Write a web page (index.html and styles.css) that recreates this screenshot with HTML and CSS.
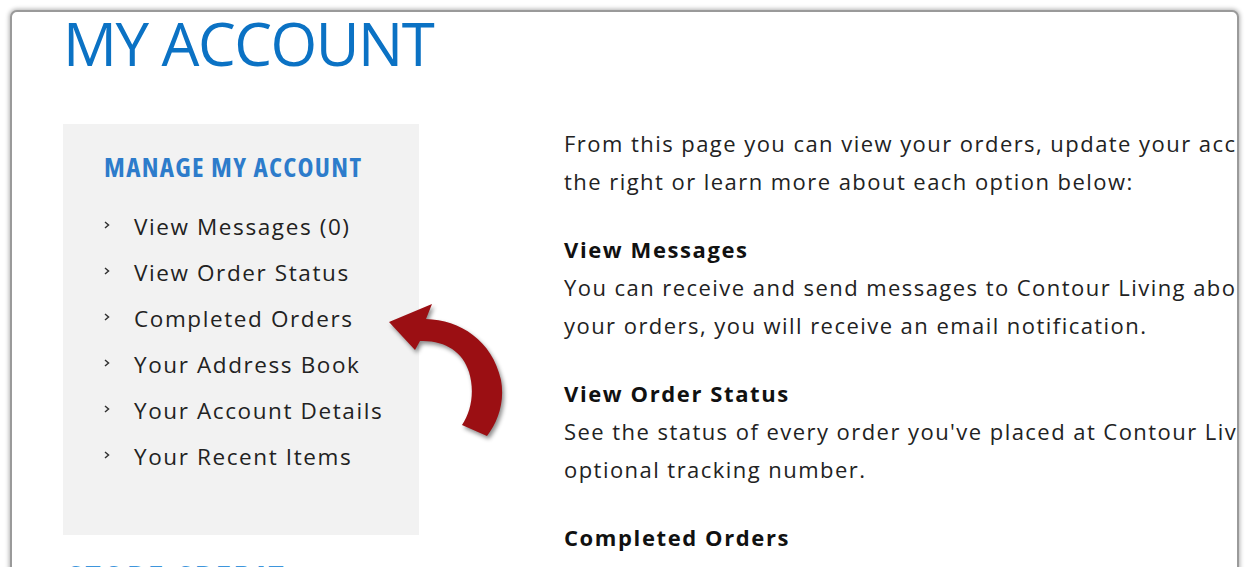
FILE: index.html
```html
<!DOCTYPE html>
<html lang="en">
<head>
<meta charset="utf-8">
<title>My Account</title>
<link rel="stylesheet" href="styles.css">
</head>
<body>
<div class="card">
  <h1 class="title">MY ACCOUNT</h1>
  <div class="columns">
    <div class="side">
      <nav class="menu">
        <h2 class="menu-head">MANAGE MY ACCOUNT</h2>
        <ul class="menu-list">
          <li><svg class="chev" viewBox="0 0 6 8"><polyline points="1,1 4.5,4 1,7"/></svg><a href="#">View Messages (0)</a></li>
          <li><svg class="chev" viewBox="0 0 6 8"><polyline points="1,1 4.5,4 1,7"/></svg><a href="#">View Order Status</a></li>
          <li><svg class="chev" viewBox="0 0 6 8"><polyline points="1,1 4.5,4 1,7"/></svg><a href="#">Completed Orders</a></li>
          <li><svg class="chev" viewBox="0 0 6 8"><polyline points="1,1 4.5,4 1,7"/></svg><a href="#">Your Address Book</a></li>
          <li><svg class="chev" viewBox="0 0 6 8"><polyline points="1,1 4.5,4 1,7"/></svg><a href="#">Your Account Details</a></li>
          <li><svg class="chev" viewBox="0 0 6 8"><polyline points="1,1 4.5,4 1,7"/></svg><a href="#">Your Recent Items</a></li>
        </ul>
      </nav>
      <h2 class="side-head">STORE CREDIT</h2>
    </div>
    <div class="content">
      <p>From this page you can view your orders, update your account details using the links on<br>the right or learn more about each option below:</p>
      <p><strong>View Messages</strong><br>You can receive and send messages to Contour Living about your orders. When a new message arrives about<br>your orders, you will receive an email notification.</p>
      <p><strong>View Order Status</strong><br>See the status of every order you've placed at Contour Living, along with the delivery method and any<br>optional tracking number.</p>
      <p><strong>Completed Orders</strong><br>See all completed orders you've placed at Contour Living.</p>
    </div>
  </div>
  <svg class="pointer" viewBox="0 0 150 160" width="150" height="160">
    <path d="M9,32 L52,14 L46,29 C80,30 112,50 121,90 C125,112 118,132 107,146 L82,135 C91,122 95,102 89,82 C83,62 65,50 40,51 L35,60 Z"/>
  </svg>
</div>
</body>
</html>
```
FILE: styles.css
```css
html, body {
  margin: 0;
  padding: 0;
  background: #fff;
  overflow: hidden;
}

body {
  font-family: "Open Sans", "Noto Sans", sans-serif;
  color: #222;
}

.card {
  position: relative;
  margin: 10px 7px 0 10px;
  height: 640px;
  border: 2px solid #9a9a9a;
  border-radius: 7px;
  box-shadow: 0 0 4px 1px rgba(0, 0, 0, 0.3);
  background: #fff;
  overflow: hidden;
  padding-left: 51px;
}

.title {
  margin: 0;
  padding-top: 1px;
  font-size: 60px;
  line-height: 60px;
  font-weight: 400;
  color: #0b72c4;
  letter-spacing: -1.5px;
}

.columns {
  display: flex;
  gap: 145px;
  margin-top: 51px;
}

.side {
  flex: none;
  width: 356px;
}

.menu {
  background: #f2f2f2;
  padding: 26px 0 56px 41px;
}

.menu-head {
  margin: 0 0 19px;
  font-size: 27px;
  line-height: 34px;
  font-weight: 700;
  font-stretch: 87.5%;
  letter-spacing: 1.3px;
  color: #2d7ccb;
}

.menu-list {
  list-style: none;
  margin: 0;
  padding: 0;
}

.menu-list li {
  display: flex;
  align-items: center;
  height: 46px;
  font-size: 22.5px;
  letter-spacing: 1.6px;
}

.chev {
  width: 6px;
  height: 8px;
  margin: -3px 24px 0 0;
  fill: none;
  stroke: #333;
  stroke-width: 1.5;
}

.menu-list a {
  color: #222;
  text-decoration: none;
}

.side-head {
  margin: 24px 0 0 4px;
  font-size: 36px;
  line-height: 40px;
  font-weight: 700;
  font-stretch: 87.5%;
  letter-spacing: 2.5px;
  color: #3d95dc;
}

.content {
  flex: none;
  white-space: nowrap;
  font-size: 22px;
  line-height: 38px;
  letter-spacing: 1.45px;
}

.content p {
  margin: 0 0 30px;
}

.content strong {
  font-weight: 700;
  color: #111;
  letter-spacing: 1.6px;
}

.pointer {
  position: absolute;
  left: 368px;
  top: 278px;
  fill: #9b0f13;
  filter: drop-shadow(2px 3px 2px rgba(0, 0, 0, 0.45));
}
```
